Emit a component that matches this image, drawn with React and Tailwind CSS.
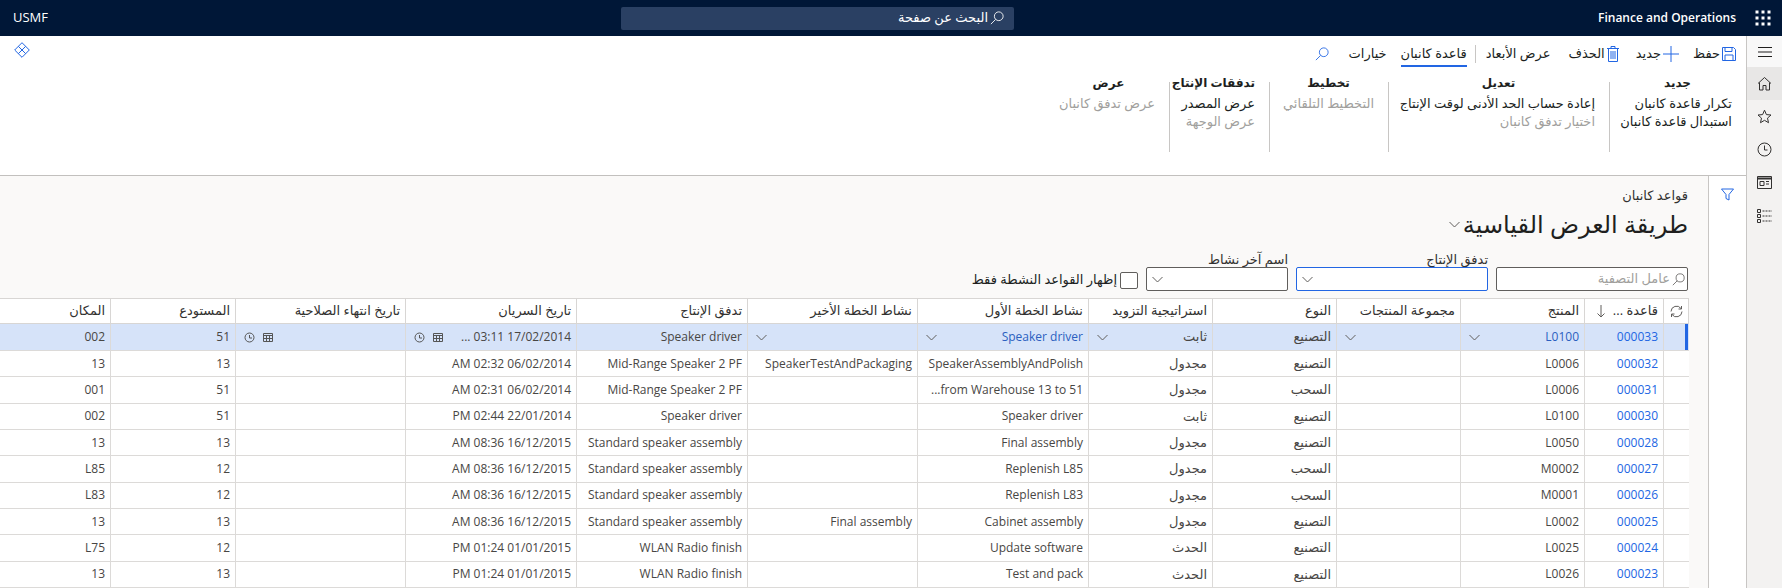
import React from "react";

const F = { fontFamily: '"Open Sans","DejaVu Sans",sans-serif' };

const Chev = ({ c = "" }) => (
  <svg width="11" height="7" viewBox="0 0 11 7" className={c} fill="none" stroke="#605e5c" strokeWidth="1"><path d="M.5 1 5.5 6 10.5 1" /></svg>
);
const Mag = ({ s = 14, color = "#fff" }) => (
  <svg width={s} height={s} viewBox="0 0 16 16" fill="none" stroke={color} strokeWidth="1"><circle cx="10" cy="6" r="5" /><path d="M6.4 9.6 1 15" /></svg>
);

const cols = [25, 79, 124, 124, 124, 124, 171, 170, 171, 171, 170, 125, 124];
const headers = ["", "قاعدة ...", "المنتج", "مجموعة المنتجات", "النوع", "استراتيجية التزويد", "نشاط الخطة الأول", "نشاط الخطة الأخير", "تدفق الإنتاج", "تاريخ السريان", "تاريخ انتهاء الصلاحية", "المستودع", "المكان"];
const SD = "Standard speaker assembly", WL = "WLAN Radio finish", MR = "Mid-Range Speaker 2 PF", SP = "Speaker driver";
const rows = [
  ["000033", "L0100", "", "التصنيع", "ثابت", SP, "", SP, "17/02/2014 03:11 ...", "", "51", "002"],
  ["000032", "L0006", "", "التصنيع", "مجدول", "SpeakerAssemblyAndPolish", "SpeakerTestAndPackaging", MR, "06/02/2014 02:32 AM", "", "13", "13"],
  ["000031", "L0006", "", "السحب", "مجدول", "from Warehouse 13 to 51...", "", MR, "06/02/2014 02:31 AM", "", "51", "001"],
  ["000030", "L0100", "", "التصنيع", "ثابت", SP, "", SP, "22/01/2014 02:44 PM", "", "51", "002"],
  ["000028", "L0050", "", "التصنيع", "مجدول", "Final assembly", "", SD, "16/12/2015 08:36 AM", "", "13", "13"],
  ["000027", "M0002", "", "السحب", "مجدول", "Replenish L85", "", SD, "16/12/2015 08:36 AM", "", "12", "L85"],
  ["000026", "M0001", "", "السحب", "مجدول", "Replenish L83", "", SD, "16/12/2015 08:36 AM", "", "12", "L83"],
  ["000025", "L0002", "", "التصنيع", "مجدول", "Cabinet assembly", "Final assembly", SD, "16/12/2015 08:36 AM", "", "13", "13"],
  ["000024", "L0025", "", "التصنيع", "الحدث", "Update software", "", WL, "01/01/2015 01:24 PM", "", "12", "L75"],
  ["000023", "L0026", "", "التصنيع", "الحدث", "Test and pack", "", WL, "01/01/2015 01:24 PM", "", "13", "13"],
];
const chevCols = [1, 2, 4, 5, 6];

const Clock = () => (
  <svg width="11" height="11" viewBox="0 0 11 11" fill="none" stroke="#555" strokeWidth="1"><circle cx="5.5" cy="5.5" r="4.5" /><path d="M5.5 3v3H8" /></svg>
);
const Cal = () => (
  <svg width="10" height="10" viewBox="0 0 10 10" fill="none" stroke="#555" strokeWidth="1"><path d="M.5 1.5h9v8h-9zM.5 3.5h9M3.5 3.5v6M6.5 3.5v6M.5 6.5h9" /></svg>
);

const Group = ({ w, title, items, last }) => (
  <div className={`${w} h-[70px] pl-[13px] pr-[14px] ${last ? "" : "border-l border-[#c8c6c4]"}`}>
    <div className="-mt-[8px] text-center font-bold text-[12px] leading-[18px] text-[#201f1e] whitespace-nowrap">{title}</div>
    <div className="mt-[2px] text-right text-[13px]">
      {items.map(([t, on]) => (
        <div key={t} className={`h-[18px] leading-[18px] whitespace-nowrap ${on ? "text-[#201f1e]" : "text-[#a19f9d]"}`}>{t}</div>
      ))}
    </div>
  </div>
);

const Cmd = ({ icon, label, c = "" }) => (
  <div className={`flex items-center gap-[2px] text-[13px] text-[#201f1e] whitespace-nowrap ${c}`}>{icon}<span>{label}</span></div>
);

export default function App() {
  return (
    <div dir="rtl" style={F} className="w-[1782px] h-[588px] overflow-hidden bg-white flex flex-col text-[13px]">
      {/* top bar */}
      <header className="h-9 shrink-0 bg-[#001737] text-white flex items-center">
        <div className="w-[38px] flex justify-center ml-[8px]">
          <svg width="16" height="16" viewBox="0 0 16 16" fill="#fff">
            {[2, 8, 14].flatMap((y) => [2, 8, 14].map((x) => <rect key={`${x}${y}`} x={x - 1.5} y={y - 1.5} width="3" height="3" />))}
          </svg>
        </div>
        <div dir="ltr" className="font-semibold text-[12px] whitespace-nowrap w-[150px] text-right">Finance and Operations</div>
        <div className="flex-1 flex justify-start pr-[572px]">
          <div className="w-[393px] h-[23px] rounded-[2px] bg-[#2a4063] flex items-center pr-[10px] gap-[2px] text-[13px]">
            <Mag s={14} /><span>البحث عن صفحة</span>
          </div>
        </div>
        <div className="pl-[13px] text-[13px]">USMF</div>
      </header>

      <div className="flex-1 flex min-h-0">
        {/* right rail */}
        <nav className="w-9 shrink-0 bg-[#f3f2f1] border-l border-[#c8c6c4] flex flex-col items-center">
          <div className="h-[31px] w-full flex items-center justify-center bg-[#f8f8f8]">
            <svg width="16" height="12" viewBox="0 0 16 12" fill="none" stroke="#201f1e"><path d="M1 1.5h14M1 6h14M1 10.5h14" /></svg>
          </div>
          <div className="h-[33px] w-full flex items-center justify-center bg-[#e8e7e6]">
            <svg width="15" height="15" viewBox="0 0 15 15" fill="none" stroke="#323130"><path d="M1 7.5 7.5 1.5 14 7.5M2.5 6.5v7.5h3.5V9.5h3V14h3.5V6.5" /></svg>
          </div>
          <div className="h-[33px] w-full flex items-center justify-center">
            <svg width="15" height="15" viewBox="0 0 15 15" fill="none" stroke="#323130"><path d="M7.5 1.2 9.4 5.6l4.6.4-3.5 3.1 1 4.6-4-2.4-4 2.4 1-4.6L1 6l4.6-.4z" /></svg>
          </div>
          <div className="h-[33px] w-full flex items-center justify-center">
            <svg width="15" height="15" viewBox="0 0 15 15" fill="none" stroke="#323130"><circle cx="7.5" cy="7.5" r="6.5" /><path d="M7.5 3.5v4.5H10.5" /></svg>
          </div>
          <div className="h-[33px] w-full flex items-center justify-center">
            <svg width="15" height="13" viewBox="0 0 15 13" fill="none" stroke="#323130"><path d="M.5.5h14v12H.5z" /><path d="M.5 2.5h14" strokeWidth="2" /><path d="M3 5.5h4v4H3zM9 5.5h3M9 8h3" /></svg>
          </div>
          <div className="h-[33px] w-full flex items-center justify-center">
            <svg width="15" height="14" viewBox="0 0 15 14" fill="none" stroke="#323130"><path d="M.5.5h3v3h-3zM.5 5.5h3v3h-3zM.5 10.5h3v3h-3z" /><path d="M5.5 2h9.5M5.5 7h9.5M5.5 12h9.5" strokeDasharray="2 1" /></svg>
          </div>
        </nav>

        <div className="flex-1 min-w-0 flex flex-col">
          {/* ribbon */}
          <section className="h-[140px] shrink-0 border-b border-[#c2c0be] bg-white">
            <div className="h-[46px] flex items-start pt-[6px] pl-[14px] pr-[10px] justify-between">
              <div className="flex items-center h-[24px] relative">
                <Cmd label="حفظ" icon={<svg width="14" height="14" viewBox="0 0 14 14" fill="none" stroke="#2266e3"><path d="M.5.5h11l2 2v11H.5zM3 .5v4h7v-4M3 13.5V8h8v5.5" /></svg>} />
                <Cmd c="mr-[14px]" label="جديد" icon={<svg width="16" height="16" viewBox="0 0 16 16" fill="none" stroke="#2266e3"><path d="M8 0v16M0 8h16" /></svg>} />
                <Cmd c="mr-[17px]" label="الحذف" icon={<svg width="12" height="16" viewBox="0 0 12 16" fill="none" stroke="#2266e3"><path d="M0 2.5h12M4 2.5v-2h4v2M1.5 2.5v13h9v-13M4 5v8M6 5v8M8 5v8" /></svg>} />
                <span className="mr-[18px] text-[#201f1e] whitespace-nowrap">عرض الأبعاد</span>
                <div className="w-px h-[18px] bg-[#c8c6c4] mr-[10px] ml-[8px]" />
                <span className="relative text-[#201f1e] whitespace-nowrap">قاعدة كانبان<span className="absolute left-0 right-0 top-[21px] h-[2px] bg-[#2266e3]" /></span>
                <span className="mr-[14px] text-[#201f1e] whitespace-nowrap">خيارات</span>
                <span className="mr-[20px]"><Mag s={14} color="#2266e3" /></span>
              </div>
              <svg width="16" height="16" viewBox="0 0 16 16" fill="none" stroke="#2266e3"><path d="M8 .7 15.3 8 8 15.3.7 8zM4.3 4.3l7.4 7.4M11.7 4.3l-7.4 7.4" /></svg>
            </div>
            <div className="flex">
              <Group w="w-[137px]" title="جديد" items={[["تكرار قاعدة كانبان", 1], ["استبدال قاعدة كانبان", 1]]} />
              <Group w="w-[221px]" title="تعديل" items={[["إعادة حساب الحد الأدنى لوقت الإنتاج", 1], ["اختيار تدفق كانبان", 0]]} />
              <Group w="w-[119px]" title="تخطيط" items={[["التخطيط التلقائي", 0]]} />
              <Group w="w-[100px]" title="تدفقات الإنتاج" items={[["عرض المصدر", 1], ["عرض الوجهة", 0]]} />
              <Group w="w-[120px]" title="عرض" items={[["عرض تدفق كانبان", 0]]} last />
            </div>
          </section>

          <div className="flex-1 min-h-0 flex">
            {/* filter strip */}
            <div className="w-[38px] shrink-0 border-l border-[#c8c6c4] bg-white flex justify-center pt-[12px]">
              <svg width="13" height="13" viewBox="0 0 13 13" fill="none" stroke="#2266e3"><path d="M.5 1h12L8 6.5V12L5 10.5v-4z" /></svg>
            </div>
            {/* content */}
            <main className="flex-1 min-w-0 bg-[#faf9f8] flex flex-col pr-[19px] overflow-hidden">
              <div className="h-[122px] shrink-0 pr-[1px] flex flex-col">
                <div className="mt-[11px] text-[13px] leading-[16px] text-[#323130]">قواعد كانبان</div>
                <div className="mt-[4px] flex items-center gap-[3px] h-[34px]">
                  <span className="text-[24px] leading-[34px] text-[#201f1e]">طريقة العرض القياسية</span>
                  <Chev />
                </div>
                <div className="mt-[10px] flex items-end gap-[8px]">
                  <div className="w-[192px] h-[24px] border border-[#605e5c] rounded-[2px] bg-white flex items-center pr-[2px] gap-[2px] text-[#a19f9d] text-[13px]"><Mag s={13} color="#605e5c" /><span>عامل التصفية</span></div>
                  <div className="flex flex-col w-[192px]">
                    <span className="text-[13px] leading-[16px] text-[#323130]">تدفق الإنتاج</span>
                    <div className="h-[24px] border border-[#2266e3] rounded-[2px] bg-white flex items-center justify-end pl-[5px]"><Chev /></div>
                  </div>
                  <div className="flex flex-col w-[142px]">
                    <span className="text-[13px] leading-[16px] text-[#323130]">اسم آخر نشاط</span>
                    <div className="h-[24px] border border-[#605e5c] rounded-[2px] bg-white flex items-center justify-end pl-[5px]"><Chev /></div>
                  </div>
                  <div className="flex items-center gap-[3px] h-[24px] pt-[2px]">
                    <div className="w-[18px] h-[17px] border border-[#605e5c] rounded-[2px] bg-white" />
                    <span className="text-[13px] text-[#201f1e] whitespace-nowrap">إظهار القواعد النشطة فقط</span>
                  </div>
                </div>
              </div>

              <table className="table-fixed w-[1702px] border-collapse bg-white text-[12px] text-[#484644] shrink-0">
                <colgroup>{cols.map((w, i) => <col key={i} style={{ width: w }} />)}</colgroup>
                <thead>
                  <tr className="h-[25px]">
                    {headers.map((h, i) => (
                      <th key={i} className="font-normal text-right text-[13px] px-[5px] border border-[#d8d6d4] text-[#323130] whitespace-nowrap overflow-hidden">
                        {i === 0 ? (
                          <svg width="13" height="13" viewBox="0 0 13 13" fill="none" stroke="#605e5c" className="mx-auto"><path d="M1 6.5A5.5 5.5 0 0 1 11 3.5M12 6.5A5.5 5.5 0 0 1 2 9.5M11.5 1v3h-3M1.5 12V9h3" /></svg>
                        ) : i === 1 ? (
                          <div className="flex justify-between items-center"><span>{h}</span><svg width="8" height="13" viewBox="0 0 8 13" fill="none" stroke="#605e5c" className="ml-[7px]"><path d="M4 0v12M.5 8.5 4 12l3.5-3.5" /></svg></div>
                        ) : h}
                      </th>
                    ))}
                  </tr>
                </thead>
                <tbody>
                  {rows.map((r, ri) => (
                    <tr key={ri} className={ri === 0 ? "h-[27px] bg-[#d6e3f9]" : "h-[26.33px]"}>
                      <td className="relative border border-[#dcdad8] border-r-0 p-0">
                        {ri === 0 && <span className="absolute right-[1px] top-0 bottom-0 w-[3px] bg-[#2266e3]" />}
                      </td>
                      {r.map((c, i) => (
                        <td key={i} className={`px-[5px] border border-[#dcdad8] whitespace-nowrap overflow-hidden ${i === 3 || i === 4 ? "text-[13px]" : ""} ${i === 0 ? "text-[#2266e3]" : ""} ${ri === 0 && (i === 1 || i === 5) ? "text-[#2b5fc0]" : ""}`}>
                          {ri === 0 && chevCols.includes(i) ? (
                            <div className="flex justify-between items-center"><span>{c}</span><Chev c="ml-[3px]" /></div>
                          ) : ri === 0 && (i === 8 || i === 9) ? (
                            <div className="flex justify-between items-center"><span>{c}</span><div className="flex items-center gap-[8px] ml-[3px]"><Cal /><Clock /></div></div>
                          ) : c}
                        </td>
                      ))}
                    </tr>
                  ))}
                </tbody>
              </table>
            </main>
          </div>
        </div>
      </div>
    </div>
  );
}
